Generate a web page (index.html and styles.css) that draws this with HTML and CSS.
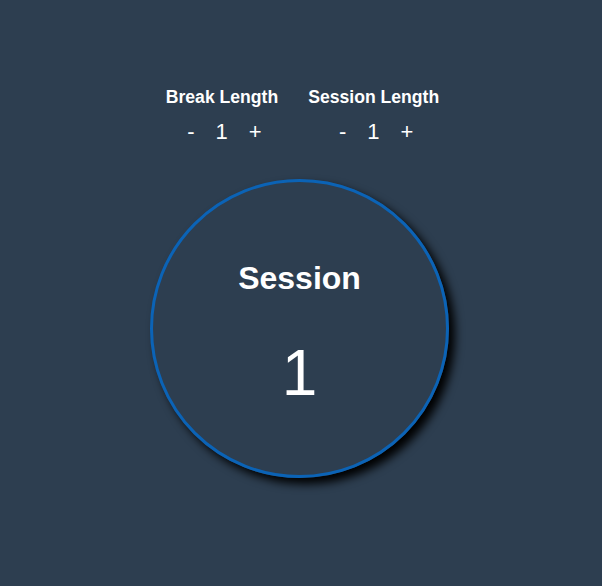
FILE: index.html
```html
<!DOCTYPE html>
<html>
<head>
<meta charset="utf-8">
<link rel="stylesheet" href="styles.css">
</head>
<body>
<div class="app">
  <div class="settings">
    <div class="setting">
      <div class="label">Break Length</div>
      <div class="controls">
        <span class="btn">-</span>
        <span class="val">1</span>
        <span class="btn">+</span>
      </div>
    </div>
    <div class="setting">
      <div class="label">Session Length</div>
      <div class="controls">
        <span class="btn">-</span>
        <span class="val">1</span>
        <span class="btn">+</span>
      </div>
    </div>
  </div>
  <div class="timer">
    <div class="timer-title">Session</div>
    <div class="timer-value">1</div>
  </div>
</div>
</body>
</html>
```
FILE: styles.css
```css
html, body {
  margin: 0;
  padding: 0;
  background: #2d3e50;
  color: #fff;
  font-family: "Liberation Sans", Arial, sans-serif;
  height: 100%;
}
.app {
  display: flex;
  flex-direction: column;
  align-items: center;
  padding-top: 87px;
}
.settings {
  display: flex;
  gap: 30px;
  padding-left: 3px;
}
.setting {
  display: flex;
  flex-direction: column;
  align-items: center;
}
.label {
  font-weight: bold;
  font-size: 17.6px;
  line-height: 20px;
}
.controls {
  display: flex;
  align-items: center;
  gap: 21px;
  margin-top: 12px;
  padding-left: 5px;
  font-size: 22px;
  line-height: 26px;
}
.btn {
  cursor: pointer;
}
.timer {
  margin-top: 34px;
  margin-right: 3px;
  width: 293px;
  height: 293px;
  border: 3px solid #0b63b6;
  border-radius: 50%;
  box-shadow: 6px 6px 10px #000;
  display: flex;
  flex-direction: column;
  align-items: center;
  box-sizing: content-box;
}
.timer-title {
  font-weight: bold;
  font-size: 32px;
  line-height: 36px;
  margin-top: 78px;
}
.timer-value {
  font-size: 64px;
  line-height: 70px;
  margin-top: 42px;
}
```
